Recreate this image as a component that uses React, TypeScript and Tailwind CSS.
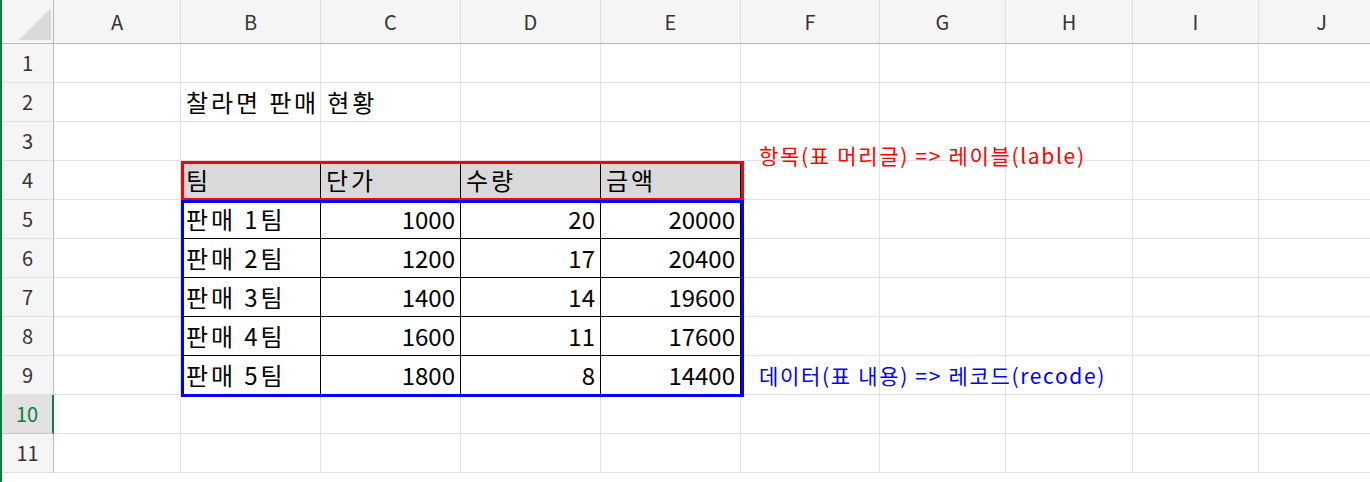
const cols = [
  { n: "A", w: 127 },
  { n: "B", w: 140 },
  { n: "C", w: 140 },
  { n: "D", w: 140 },
  { n: "E", w: 140 },
  { n: "F", w: 139 },
  { n: "G", w: 126 },
  { n: "H", w: 127 },
  { n: "I", w: 126 },
  { n: "J", w: 126 },
];

const data: Record<number, string[]> = {
  5: ["판매 1팀", "1000", "20", "20000"],
  6: ["판매 2팀", "1200", "17", "20400"],
  7: ["판매 3팀", "1400", "14", "19600"],
  8: ["판매 4팀", "1600", "11", "17600"],
  9: ["판매 5팀", "1800", "8", "14400"],
};
const head = ["팀", "단가", "수량", "금액"];

function Cell({ r, c }: { r: number; c: number }) {
  const inTable = r >= 4 && r <= 9 && c >= 1 && c <= 4;
  let text = "";
  let right = false;
  if (r === 4 && inTable) text = head[c - 1];
  if (data[r] && inTable) {
    text = data[r][c - 1];
    right = c > 1;
  }
  const title = r === 2 && c === 1;
  const korean = title || (inTable && !right);
  return (
    <div
      className={`h-[39px] flex items-center overflow-visible whitespace-nowrap px-[5px] ${
        korean ? "text-[24px] tracking-[0.12em]" : "text-[24px]"
      } ${inTable ? "border-r border-b border-black" : "border-r border-b border-[#e1e1e1]"} ${
        r === 4 && inTable ? "bg-[#d9d9d9]" : ""
      } ${right ? "justify-end" : ""}`}
    >
      {title ? "찰라면 판매 현황" : text}
    </div>
  );
}

export default function App() {
  const rows = Array.from({ length: 11 }, (_, i) => i + 1);
  return (
    <div
      className="relative w-[1370px] h-[482px] overflow-hidden bg-white text-black border-l-2 border-[#107c41]"
      style={{ fontFamily: '"Noto Sans CJK KR", "Noto Sans", sans-serif' }}
    >
      <div className="flex h-[44px] bg-[#f5f5f5] border-b border-[#b8b8b8]">
        <div className="w-[52px] shrink-0 border-r border-[#b8b8b8] relative">
          <div className="absolute right-[2px] bottom-[3px] w-0 h-0 border-l-[32px] border-l-transparent border-b-[32px] border-b-[#dadada]" />
        </div>
        {cols.map((c) => (
          <div
            key={c.n}
            style={{ width: c.w }}
            className="shrink-0 flex items-center justify-center text-[20px] text-[#333] border-r border-[#e1e1e1]"
          >
            {c.n}
          </div>
        ))}
      </div>
      {rows.map((r) => (
        <div key={r} className="flex">
          <div
            className={`w-[52px] shrink-0 h-[39px] flex items-center justify-center text-[20px] border-b ${
              r === 10
                ? "bg-[#e1e1e1] text-[#107c41] border-r-2 border-r-[#107c41] border-b-[#c6c6c6]"
                : "bg-[#f5f5f5] text-[#333] border-r border-r-[#b8b8b8] border-b-[#e1e1e1]"
            }`}
          >
            {r}
          </div>
          {cols.map((c, ci) => (
            <div key={c.n} style={{ width: c.w }} className="shrink-0">
              <Cell r={r} c={ci} />
            </div>
          ))}
        </div>
      ))}
      <div className="absolute left-[179px] top-[161px] w-[563px] h-[40px] border-[3px] border-[#ff0000]" />
      <div className="absolute left-[179px] top-[200px] w-[563px] h-[197px] border-[3px] border-[#0000ff]" />
      <div className="absolute left-[757px] top-[140px] text-[21px] tracking-[0.08em] text-[#ff0000] whitespace-nowrap">
        항목(표 머리글) =&gt; 레이블(lable)
      </div>
      <div className="absolute left-[757px] top-[360px] text-[21px] tracking-[0.08em] text-[#0000ff] whitespace-nowrap">
        데이터(표 내용) =&gt; 레코드(recode)
      </div>
    </div>
  );
}
